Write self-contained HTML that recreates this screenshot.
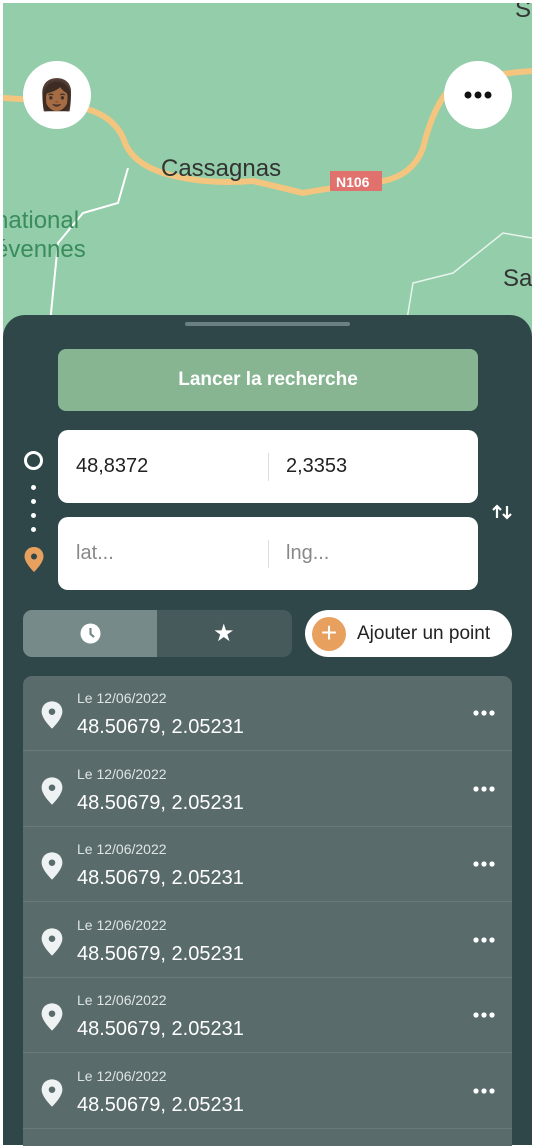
<!DOCTYPE html>
<html><head><meta charset="utf-8"><style>
*{margin:0;padding:0;box-sizing:border-box}
body{width:535px;height:1139px;overflow:hidden;background:#fff;font-family:"Liberation Sans",sans-serif;position:relative}
.map{position:absolute;left:3px;top:3px;width:529px;height:340px;background:#93cdaa;overflow:hidden}
.circ{position:absolute;width:68px;height:68px;border-radius:50%;background:#fff;display:flex;align-items:center;justify-content:center}
.panel{position:absolute;left:3px;top:315px;width:529px;height:830px;background:#2f4748;border-radius:22px 22px 0 0}
.abs{position:absolute}
.inp{position:absolute;left:58px;width:420px;height:73px;background:#fff;border-radius:10px;font-size:20px;color:#222}
.inp span{position:absolute;top:25px}
.inp i{position:absolute;left:210px;top:23px;width:1px;height:28px;background:#ddd}
.row{position:absolute;left:23px;width:489px;height:75px;border-bottom:1px solid #6b7b7b}
.row .d{position:absolute;left:54px;top:14px;font-size:14px;color:#dfe5e5}
.row .c{position:absolute;left:54px;top:40px;font-size:20px;color:#fff}
.row svg{position:absolute}
</style></head><body>
<div class="map">
<svg width="529" height="340" style="position:absolute;left:0;top:0">
<path d="M0 95 Q60 98 90 108 Q115 118 122 140 Q130 160 160 170 Q200 182 250 178 Q280 185 300 190 Q320 186 380 178 Q410 172 420 145 Q430 105 445 88 Q470 72 529 68" stroke="#f3c57f" stroke-width="6" fill="none"/>
<path d="M125 165 L115 200 L80 210 L55 240 L50 290 L45 340" stroke="#fff" stroke-width="2" fill="none"/>
<path d="M400 340 L410 280 L450 270 L500 230 L529 235" stroke="#e8f4ec" stroke-width="1.5" fill="none"/>
<rect x="327" y="168" width="52" height="20" fill="#e0716c"/>
<text x="333" y="184" font-family="Liberation Sans" font-weight="bold" font-size="14" fill="#fff">N106</text>
<text x="158" y="173" font-family="Liberation Sans" font-size="24" fill="#333">Cassagnas</text>
<text x="-8" y="225" font-family="Liberation Sans" font-size="24" fill="#3a8c5c">national</text>
<text x="-8" y="254" font-family="Liberation Sans" font-size="24" fill="#3a8c5c">évennes</text>
<text x="500" y="283" font-family="Liberation Sans" font-size="24" fill="#333">Sa</text>
<text x="512" y="14" font-family="Liberation Sans" font-size="24" fill="#333">S</text>
</svg>
<div class="circ" style="left:20px;top:58px;font-size:30px">👩🏾</div>
<div class="circ" style="left:441px;top:58px"><svg width="28" height="8"><circle cx="4" cy="4" r="3.5" fill="#111"/><circle cx="14" cy="4" r="3.5" fill="#111"/><circle cx="24" cy="4" r="3.5" fill="#111"/></svg></div>
</div>
<div class="panel"></div>
<div class="abs" style="left:185px;top:322px;width:165px;height:4px;border-radius:2px;background:#6b8080"></div>
<div class="abs" style="left:58px;top:349px;width:420px;height:62px;border-radius:8px;background:#87b592;color:#fff;font-weight:bold;font-size:19px;text-align:center;line-height:62px">Lancer la recherche</div>
<div class="abs" style="left:24px;top:451px;width:19px;height:19px;border:3.5px solid #fff;border-radius:50%"></div>
<div class="abs" style="left:31px;top:485px;width:5px;height:5px;border-radius:50%;background:#fff"></div>
<div class="abs" style="left:31px;top:499px;width:5px;height:5px;border-radius:50%;background:#fff"></div>
<div class="abs" style="left:31px;top:513px;width:5px;height:5px;border-radius:50%;background:#fff"></div>
<div class="abs" style="left:31px;top:527px;width:5px;height:5px;border-radius:50%;background:#fff"></div>
<svg class="abs" style="left:23px;top:546px" width="22" height="27" viewBox="0 0 22 27"><path d="M11 1C5.5 1 1.5 5 1.5 10.5 1.5 17 11 26 11 26S20.5 17 20.5 10.5C20.5 5 16.5 1 11 1Z" fill="#e8a05e"/><circle cx="11" cy="10.5" r="3" fill="#2f4748"/></svg>
<div class="inp" style="top:430px"><span style="left:18px">48,8372</span><i></i><span style="left:228px">2,3353</span></div>
<div class="inp" style="top:517px;color:#888"><span style="left:18px">lat...</span><i></i><span style="left:228px">lng...</span></div>
<svg class="abs" style="left:490px;top:502px" width="24" height="20"><path d="M7 16V4M3 8L7 4L11 8" stroke="#fff" stroke-width="2.2" fill="none"/><path d="M17 4V16M13 12L17 16L21 12" stroke="#fff" stroke-width="2.2" fill="none"/></svg>
<div class="abs" style="left:23px;top:610px;width:269px;height:47px;border-radius:9px;background:#465a5b;overflow:hidden"><div style="width:134px;height:47px;background:#768a8a"></div></div>
<svg class="abs" style="left:80px;top:623px" width="21" height="21"><circle cx="10.5" cy="10.5" r="10" fill="#fff"/><path d="M10.5 5V11L14 14" stroke="#768a8a" stroke-width="2.2" fill="none"/></svg>
<div class="abs" style="left:213px;top:619px;color:#fff;font-size:24px">★</div>
<div class="abs" style="left:305px;top:610px;width:207px;height:47px;border-radius:24px;background:#fff"></div>
<div class="abs" style="left:312px;top:617px;width:34px;height:34px;border-radius:50%;background:#e8a05e;color:#fff;font-size:28px;line-height:32px;text-align:center">+</div>
<div class="abs" style="left:357px;top:623px;font-size:19px;color:#222">Ajouter un point</div>
<div class="abs" style="left:23px;top:676px;width:489px;height:470px;background:#5a6b6b;border-radius:9px 9px 0 0"></div>
<div id="rows"></div>
<script>
var h='';for(var i=0;i<6;i++){var t=676+i*75.6;h+='<div class="row" style="top:'+t+'px"><svg style="left:17px;top:24px" width="24" height="30" viewBox="0 0 22 27"><path d="M11 1C5.5 1 1.5 5 1.5 10.5 1.5 17 11 26 11 26S20.5 17 20.5 10.5C20.5 5 16.5 1 11 1Z" fill="#eef2f2"/><circle cx="11" cy="10.5" r="3" fill="#5a6b6b"/></svg><div class="d">Le 12/06/2022</div><div class="c">48.50679, 2.05231</div><svg style="left:450px;top:34px" width="22" height="6"><circle cx="3" cy="3" r="2.6" fill="#fff"/><circle cx="11" cy="3" r="2.6" fill="#fff"/><circle cx="19" cy="3" r="2.6" fill="#fff"/></svg></div>'}
document.getElementById('rows').innerHTML=h;
</script>
</body></html>
